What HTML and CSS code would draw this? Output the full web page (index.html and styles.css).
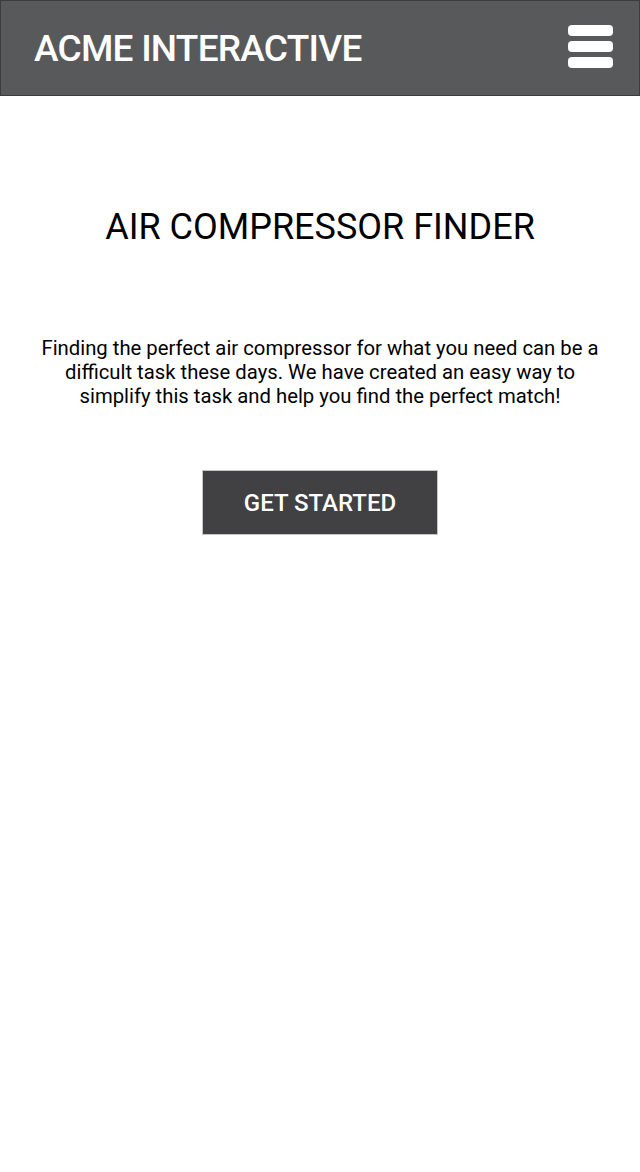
FILE: index.html
```html
<!DOCTYPE html>
<html lang="en">
<head>
<meta charset="utf-8">
<title>Acme Interactive</title>
<link rel="stylesheet" href="styles.css">
</head>
<body>
<header class="topbar">
  <div class="brand">ACME INTERACTIVE</div>
  <button class="menu" aria-label="Menu">
    <span class="bar"></span>
    <span class="bar"></span>
    <span class="bar"></span>
  </button>
</header>
<main class="hero">
  <h1 class="title">AIR COMPRESSOR FINDER</h1>
  <p class="intro">Finding the perfect air compressor for what you need can be a difficult task these days. We have created an easy way to simplify this task and help you find the perfect match!</p>
  <a class="cta" href="#">GET STARTED</a>
</main>
</body>
</html>
```
FILE: styles.css
```css
html, body {
  margin: 0;
  padding: 0;
  background: #ffffff;
  font-family: Roboto, "Liberation Sans", sans-serif;
}
.topbar {
  box-sizing: border-box;
  height: 96px;
  background: #58595b;
  border: 1px solid #3c3c3e;
  display: flex;
  align-items: center;
  justify-content: space-between;
  padding: 0 26px 0 33px;
}
.brand {
  color: #ffffff;
  font-size: 37px;
  font-weight: 500;
  letter-spacing: -0.75px;
  line-height: 1;
  margin-top: 0;
}
.menu {
  background: none;
  border: 0;
  padding: 0;
  display: flex;
  flex-direction: column;
  gap: 5px;
  margin-top: -3px;
}
.bar {
  display: block;
  width: 45px;
  height: 11px;
  background: #ffffff;
  border-radius: 4px;
}
.hero {
  display: flex;
  flex-direction: column;
  align-items: center;
  text-align: center;
  padding: 0 30px;
}
.title {
  margin: 110px 0 0;
  font-size: 36px;
  font-weight: 400;
  line-height: 42px;
  color: #000000;
}
.intro {
  margin: 88px 0 0;
  font-size: 20.3px;
  line-height: 24px;
  color: #000000;
}
.cta {
  margin-top: 62px;
  width: 236px;
  height: 65px;
  box-sizing: border-box;
  background: #414042;
  border: 1px solid #c4c4c4;
  color: #ffffff;
  font-size: 24px;
  font-weight: 500;
  text-decoration: none;
  display: flex;
  align-items: center;
  justify-content: center;
}
```
